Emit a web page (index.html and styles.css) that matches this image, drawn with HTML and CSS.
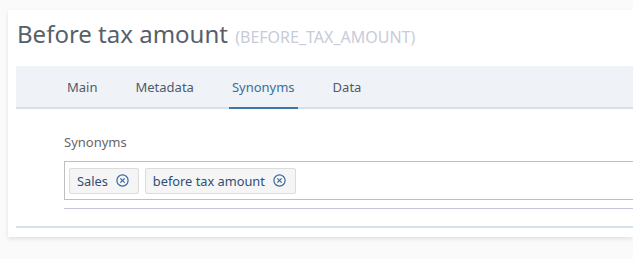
FILE: index.html
```html
<!DOCTYPE html>
<html>
<head>
<meta charset="utf-8">
<link rel="stylesheet" href="styles.css">
</head>
<body>
<div class="card">
  <h1 class="title">Before tax amount <span class="tech">(BEFORE_TAX_AMOUNT)</span></h1>
  <div class="tabs">
    <div class="tab">Main</div>
    <div class="tab">Metadata</div>
    <div class="tab active">Synonyms</div>
    <div class="tab">Data</div>
  </div>
  <div class="content">
    <div class="label">Synonyms</div>
    <div class="input">
      <span class="token">Sales <svg class="x" width="13" height="13" viewBox="0 0 13 13"><circle cx="6.5" cy="6.5" r="5.6" fill="none" stroke="#3a6a9c" stroke-width="1.2"/><path d="M4.3 4.3 L8.7 8.7 M8.7 4.3 L4.3 8.7" stroke="#3a6a9c" stroke-width="1.2" fill="none"/></svg></span>
      <span class="token">before tax amount <svg class="x" width="13" height="13" viewBox="0 0 13 13"><circle cx="6.5" cy="6.5" r="5.6" fill="none" stroke="#3a6a9c" stroke-width="1.2"/><path d="M4.3 4.3 L8.7 8.7 M8.7 4.3 L4.3 8.7" stroke="#3a6a9c" stroke-width="1.2" fill="none"/></svg></span>
    </div>
    <div class="underline"></div>
  </div>
</div>
</body>
</html>
```
FILE: styles.css
```css
html, body { margin: 0; padding: 0; }
body {
  background: #fafafa;
  width: 633px;
  height: 259px;
  overflow: hidden;
  font-family: "Noto Sans", "Open Sans", sans-serif;
}
.card {
  margin: 10px 0 0 8px;
  background: #fff;
  padding: 0 0 9px 8px;
  box-shadow: 0 2px 4px rgba(0,0,0,0.10);
}
.title {
  margin: 0;
  padding: 4px 0 0 1px;
  height: 56px;
  box-sizing: border-box;
  font-weight: normal;
  font-size: 24px;
  line-height: 40px;
  color: #56606b;
  white-space: nowrap;
}
.tech {
  font-size: 16px;
  color: #c8cbd9;
  margin-left: 1px;
}
.tabs {
  display: flex;
  height: 41px;
  background: #eff3f8;
  border-bottom: 2px solid #d5e1ed;
  padding-left: 48px;
}
.tab {
  position: relative;
  padding: 0 3px;
  margin-right: 32px;
  line-height: 42px;
  font-size: 13px;
  color: #4f5a66;
}
.tab.active { color: #3b6e9a; }
.tab.active::after {
  content: "";
  position: absolute;
  left: 0; right: 0;
  bottom: -2px;
  height: 2px;
  background: #3d77aa;
}
.content {
  padding: 24px 0 17px 48px;
  border-bottom: 2px solid #d5e1ed;
}
.label {
  font-size: 13px;
  color: #666;
  line-height: 18px;
  margin-bottom: 10px;
}
.input {
  border: 1px solid #bfbfbf;
  border-right: none;
  height: 39px;
  display: flex;
  align-items: center;
  gap: 6px;
  padding-left: 4px;
  box-sizing: border-box;
}
.token {
  display: inline-flex;
  align-items: center;
  height: 26px;
  box-sizing: border-box;
  border: 1px solid #dcdcdc;
  border-radius: 2px;
  background: #f5f5f5;
  padding: 0 9px 0 7px;
  font-size: 12.8px;
  color: #2d4f75;
}
.x {
  margin-left: 8px;
  display: block;
}
.underline {
  margin-top: 8px;
  height: 1px;
  background: #c9c5d9;
}
```
